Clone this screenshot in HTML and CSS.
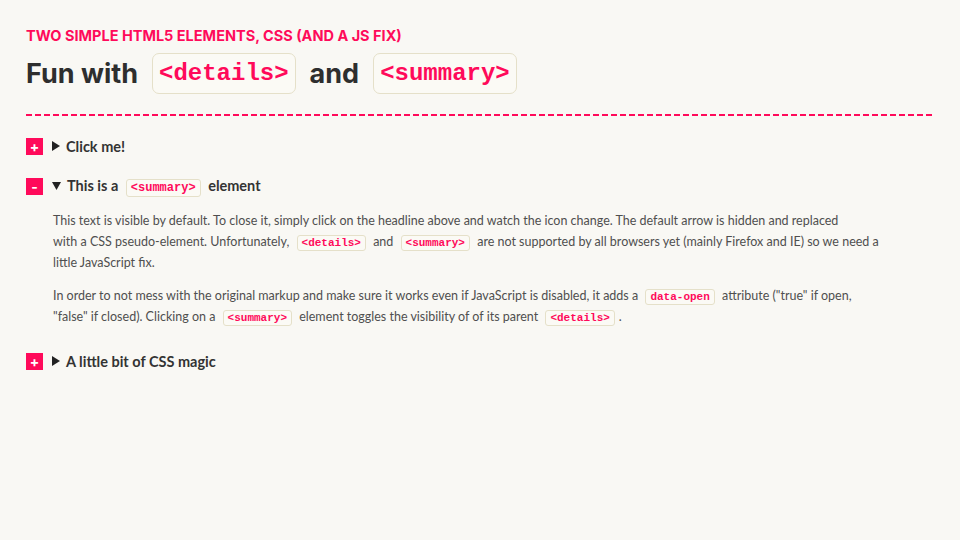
FILE: index.html
```html
<!DOCTYPE html>
<html lang="en">
<head>
<meta charset="utf-8">
<title>Fun with details and summary</title>
<link rel="stylesheet" href="styles.css">
</head>
<body>
<header class="header">
  <p class="kicker">Two simple HTML5 elements, CSS (and a JS fix)</p>
  <h1 class="title">Fun with <code class="code code-lg">&lt;details&gt;</code> and <code class="code code-lg">&lt;summary&gt;</code></h1>
</header>
<div class="rule"></div>
<main class="list">
  <details class="item">
    <summary class="summary"><span class="toggle">+</span><svg class="arrow" width="8" height="10" viewBox="0 0 8 10"><path d="M0 0 L8 5 L0 10 Z" fill="#222"/></svg><span>Click me!</span></summary>
  </details>
  <details class="item" open>
    <summary class="summary"><span class="toggle">-</span><svg class="arrow" width="9" height="8" viewBox="0 0 9 8"><path d="M0 0 L9 0 L4.5 8 Z" fill="#222"/></svg><span>This is a <code class="code code-md">&lt;summary&gt;</code> element</span></summary>
    <div class="content">
      <p>This text is visible by default. To close it, simply click on the headline above and watch the icon change. The default arrow is hidden and replaced with&nbsp;a&nbsp;CSS pseudo-element. Unfortunately, <code class="code code-sm">&lt;details&gt;</code> and <code class="code code-sm">&lt;summary&gt;</code> are not supported by all browsers yet (mainly Firefox and IE) so we need a little JavaScript fix.</p>
      <p>In order to not mess with the original markup and make sure it works even if JavaScript is disabled, it adds a <code class="code code-sm">data-open</code> attribute ("true" if open, "false" if closed). Clicking on a <code class="code code-sm">&lt;summary&gt;</code> element toggles the visibility of of its parent <code class="code code-sm">&lt;details&gt;</code>.</p>
    </div>
  </details>
  <details class="item">
    <summary class="summary"><span class="toggle">+</span><svg class="arrow" width="8" height="10" viewBox="0 0 8 10"><path d="M0 0 L8 5 L0 10 Z" fill="#222"/></svg><span>A little bit of CSS magic</span></summary>
  </details>
</main>
</body>
</html>
```
FILE: styles.css
```css
html, body {
  margin: 0;
  background: #f9f8f4;
}
body {
  padding: 26px 26px 0 26px;
  font-family: Lato, "Noto Sans", sans-serif;
  color: #333;
}
.header {
  display: flex;
  flex-direction: column;
}
.kicker {
  margin: 0;
  font-family: Inter, "Noto Sans", sans-serif;
  font-size: 14.5px;
  line-height: 20px;
  font-weight: 700;
  text-transform: uppercase;
  color: #ff0a5a;
}
.title {
  margin: 7px 0 0 0;
  font-family: Inter, "Noto Sans", sans-serif;
  font-size: 27px;
  line-height: 41px;
  font-weight: 700;
  color: #2e2e2e;
  display: flex;
  align-items: center;
  gap: 14px;
}
.code {
  font-family: "Liberation Mono", "Courier New", monospace;
  font-weight: 700;
  color: #ff0a5a;
  background: #fbfaf5;
  border: 1px solid #e5e0c9;
  border-radius: 5px;
}
.code-lg {
  font-size: 24px;
  line-height: 39px;
  padding: 0 6px;
  border-radius: 7px;
}
.code-md {
  font-size: 12px;
  line-height: 16px;
  padding: 1px 4px;
  margin: 0 4px;
  border-radius: 3px;
}
.code-sm {
  font-size: 11px;
  line-height: 13px;
  padding: 1px 4px;
  margin: 0 4px;
  border-radius: 3px;
}
.rule {
  margin-top: 20px;
  height: 2px;
  width: 908px;
  background: repeating-linear-gradient(to right, #ff0a5a 0 6px, transparent 6px 9px);
}
.list {
  margin-top: 18px;
  display: flex;
  flex-direction: column;
  gap: 16px;
}
.summary {
  list-style: none;
  display: flex;
  align-items: center;
  height: 24px;
  font-size: 14.5px;
  font-weight: 700;
  color: #333;
  cursor: pointer;
}
.summary::-webkit-details-marker { display: none; }
.toggle {
  width: 17px;
  height: 17px;
  background: #ff0a5a;
  color: #fff;
  font-family: Inter, sans-serif;
  font-size: 14px;
  line-height: 17px;
  text-align: center;
  font-weight: 700;
}
.arrow {
  margin: 0 6px 0 9px;
  flex: none;
}
.content {
  padding: 12px 0 6px 27px;
  width: 828px;
  font-size: 12.5px;
  line-height: 21px;
  color: #4f4f4f;
}
.content p {
  margin: 0;
}
.content p + p {
  margin-top: 12px;
}
```
